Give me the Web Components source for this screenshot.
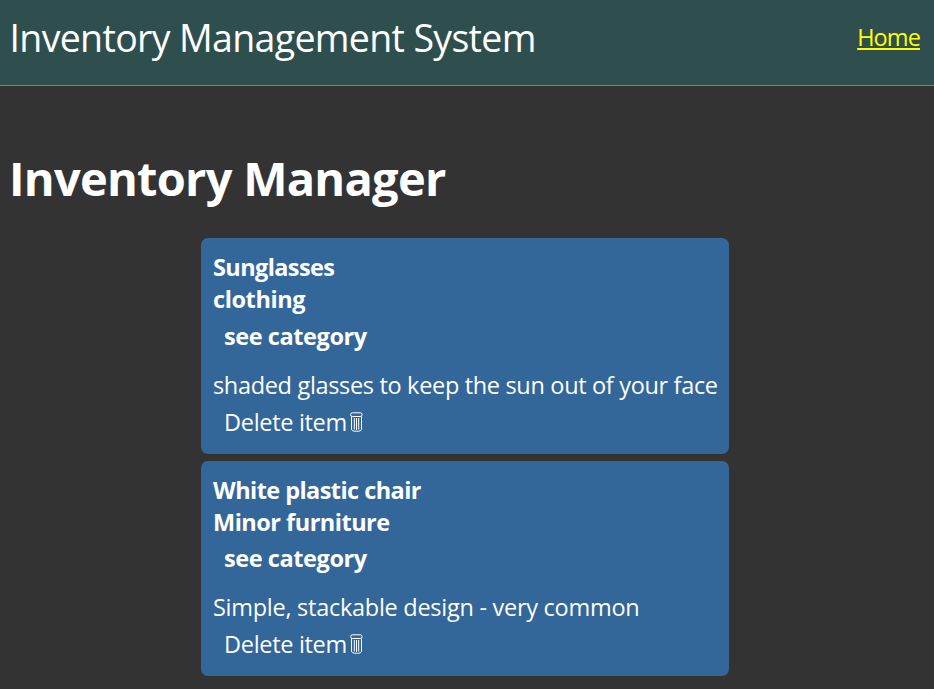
<!DOCTYPE html>
<html lang="en">
<head>
<meta charset="utf-8">
<title>Inventory Management System</title>
<style>
  body { margin: 0; background: #333; color: #fff; font: 23.5px/32px "Open Sans", "Noto Sans", sans-serif; }
</style>
</head>
<body>
<site-header>Inventory Management System<a slot="nav" href="#" style="color:#ff0">Home</a></site-header>
<inventory-list>
  <span slot="heading">Inventory Manager</span>
  <inventory-item>
    <span slot="name" style="letter-spacing:-.6px">Sunglasses</span>
    <span slot="category" style="letter-spacing:-.4px">clothing</span>
    <span slot="description" style="letter-spacing:-.326px">shaded glasses to keep the sun out of your face</span>
  </inventory-item>
  <inventory-item style="--link-gap:4px">
    <span slot="name" style="letter-spacing:-.56px">White plastic chair</span>
    <span slot="category" style="letter-spacing:-.5px">Minor furniture</span>
    <span slot="description" style="letter-spacing:-.27px">Simple, stackable design - very common</span>
  </inventory-item>
</inventory-list>
<script>
const define = (name, html) => customElements.define(name, class extends HTMLElement {
  constructor() {
    super();
    this.attachShadow({ mode: 'open' }).innerHTML = html;
  }
});

define('site-header', `
<style>
  :host { display: flex; justify-content: space-between; box-sizing: border-box; height: 86px; padding: 12px 14px 0 9.5px; background: #2f4f4f; border-bottom: 1px solid #708090; }
  .title { font-size: 37.5px; line-height: 51px; letter-spacing: -.66px; }
  ::slotted(a) { letter-spacing: -.9px; text-decoration-thickness: 2px; text-underline-offset: 2px; text-decoration-skip-ink: none; }
  nav { padding-top: 9px; }
</style>
<div class="title"><slot></slot></div><nav><slot name="nav"></slot></nav>`);

define('inventory-list', `
<style>
  :host { display: block; padding: 60px 9px 0; }
  h1 { margin: 0 0 28px; font-size: 47px; line-height: 64px; letter-spacing: -.75px; }
  .items { display: flex; flex-direction: column; gap: 7px; width: 528px; margin: 0 auto; position: relative; left: -2px; }
</style>
<h1><slot name="heading"></slot></h1>
<div class="items"><slot></slot></div>`);

define('trash-icon', `
<style>
  :host { display: block; width: 13px; height: 20px; }
  svg { display: block; }
</style>
<svg width="13" height="20" viewBox="0 0 13 20" fill="none" stroke="#fff" stroke-width="1" aria-hidden="true">
  <rect x=".7" y=".8" width="11.3" height="3.7" rx="1.6"/>
  <path d="M1.5 4.5V17.2Q1.5 19.3 6.5 19.3T11.5 17.2V4.5M4.3 6V17.5M6.5 6V18M8.7 6V17.5"/>
</svg>`);

define('inventory-item', `
<style>
  :host { display: block; padding: 13px 12px 16px; background: #369; border-radius: 7px; white-space: nowrap; }
  strong, p { display: block; margin: 0; }
  .link { margin: var(--link-gap, 5px) 11px 17px; letter-spacing: -.42px; }
  .delete { display: flex; align-items: center; gap: 3px; margin: 5px 11px 0; letter-spacing: -.31px; }
</style>
<strong><slot name="name"></slot></strong>
<strong><slot name="category"></slot></strong>
<strong class="link">see category</strong>
<p><slot name="description"></slot></p>
<div class="delete"><span>Delete item</span><trash-icon></trash-icon></div>`);
</script>
</body>
</html>
